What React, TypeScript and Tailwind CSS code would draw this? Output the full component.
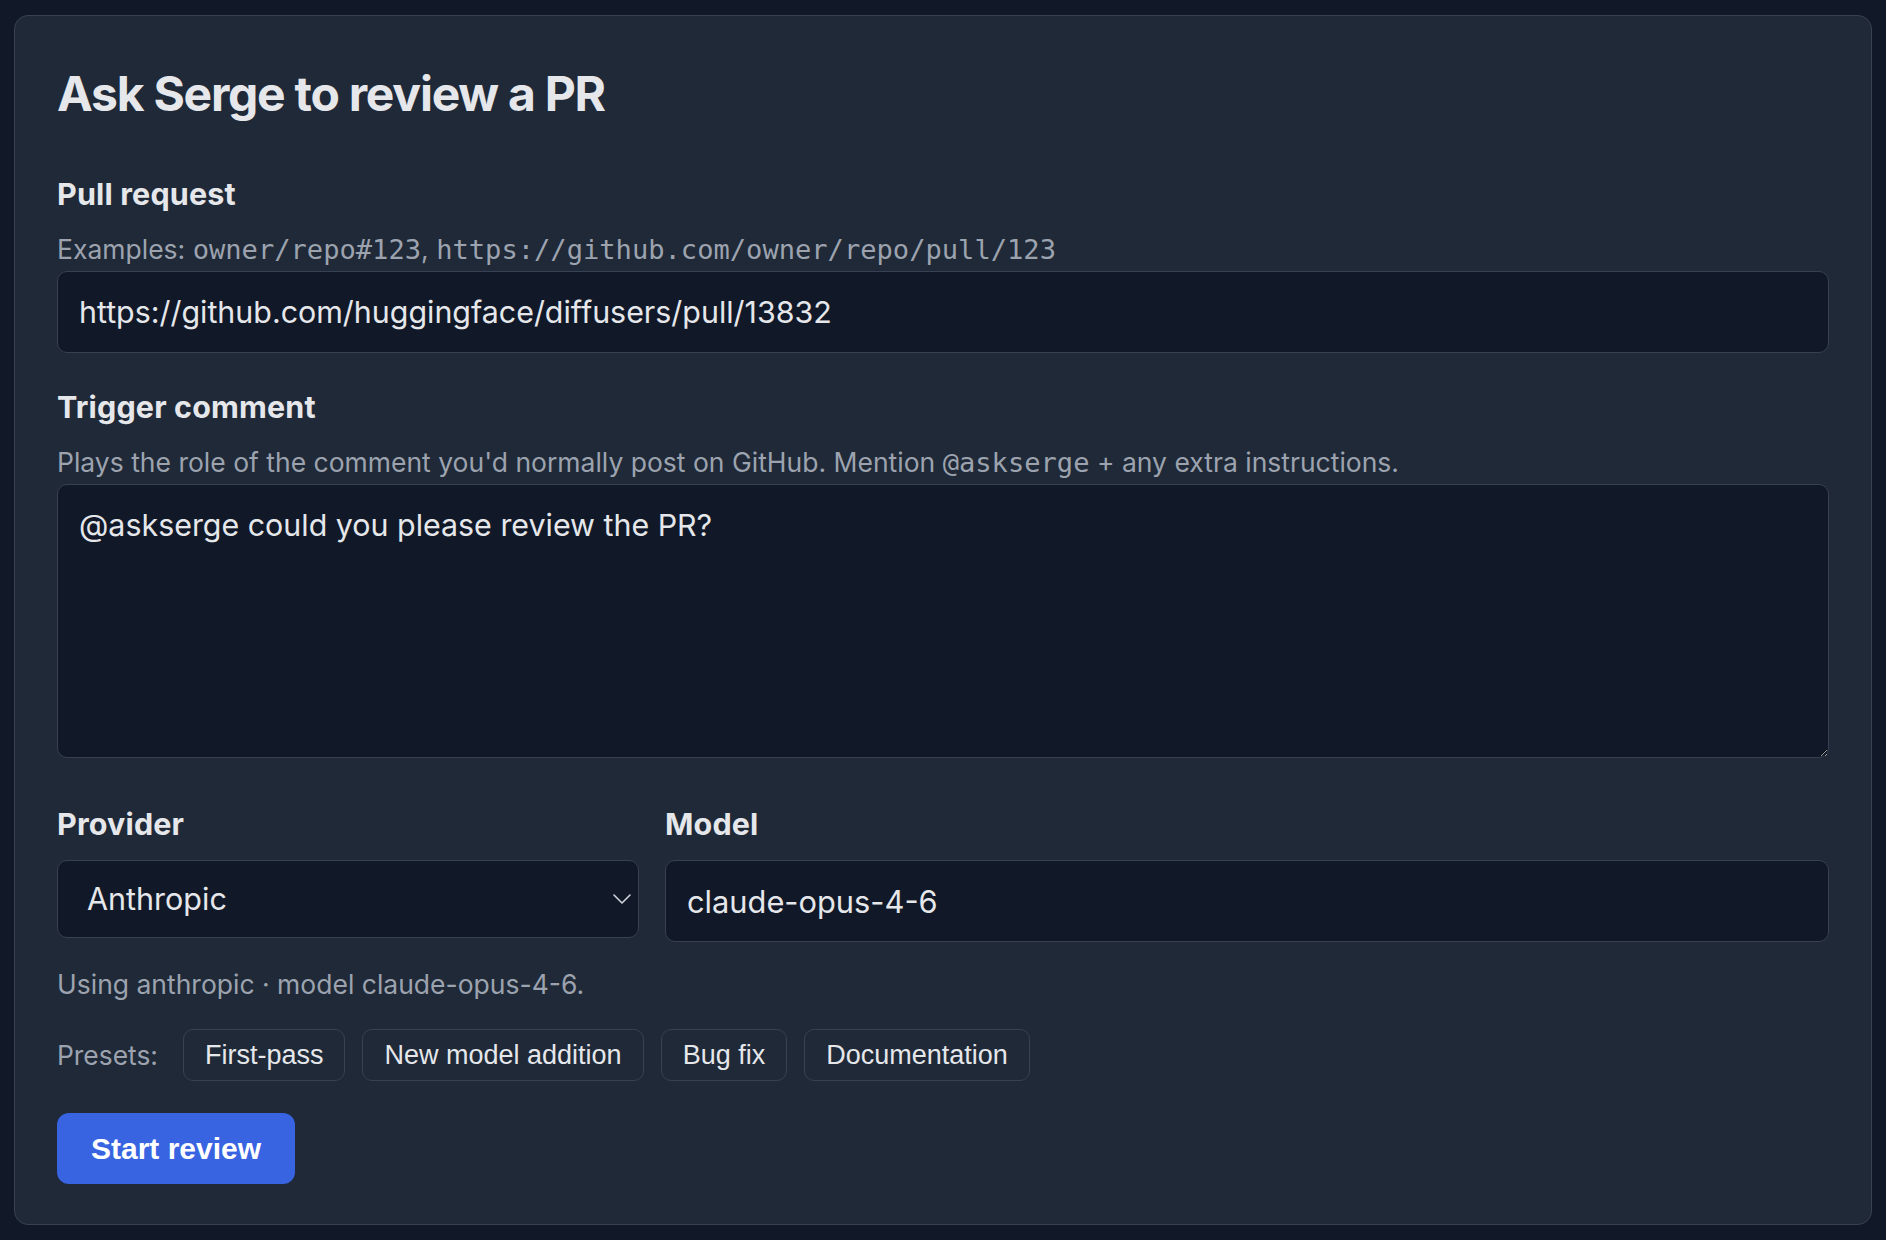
import React from "react";

const sans = { fontFamily: "Inter, 'Noto Sans', sans-serif" };
const mono = { fontFamily: "'DejaVu Sans Mono', 'Liberation Mono', monospace" };
const btnFont = { fontFamily: "'Liberation Sans', Arial, sans-serif" };

function Label({ children }: { children: React.ReactNode }) {
  return (
    <label className="block text-[30.5px] leading-[36px] font-bold tracking-[0.15px] text-[#e5e7eb]">
      {children}
    </label>
  );
}

function Code({ children }: { children: React.ReactNode }) {
  return (
    <code style={mono} className="text-[27.1px] leading-[20px]">
      {children}
    </code>
  );
}

const presets = ["First-pass", "New model addition", "Bug fix", "Documentation"];

export default function App() {
  return (
    <div style={sans} className="min-h-screen bg-[#111827] pt-[15px] px-[14px] pb-[14px]">
      <div className="rounded-[14px] border border-[#374151] bg-[#1f2937] px-[42px] pt-[48px] pb-[40px]">
        <h1 className="text-[48px] leading-[60px] font-bold tracking-[-1.25px] text-[#e5e7eb]">
          Ask Serge to review a PR
        </h1>

        {/* Pull request */}
        <div className="mt-[52px]">
          <Label>Pull request</Label>
          <p className="mt-[21px] text-[26.5px] leading-[32px] text-[#9ca3af]">
            Examples: <Code>owner/repo#123</Code>, <Code>https://github.com/owner/repo/pull/123</Code>
          </p>
          <input
            style={sans}
            defaultValue="https://github.com/huggingface/diffusers/pull/13832"
            className="mt-[6px] block w-full h-[82px] rounded-[10px] border border-[#374151] bg-[#111827] px-[21px] text-[30.4px] text-[#e5e7eb] outline-none"
          />
        </div>

        {/* Trigger comment */}
        <div className="mt-[36px]">
          <Label>Trigger comment</Label>
          <p className="mt-[21px] text-[26.5px] leading-[32px] text-[#9ca3af]">
            Plays the role of the comment you'd normally post on GitHub. Mention <Code>@askserge</Code> + any extra instructions.
          </p>
          <textarea
            style={sans}
            defaultValue="@askserge could you please review the PR?"
            className="mt-[6px] block w-full h-[274px] rounded-[10px] border border-[#374151] bg-[#111827] px-[21px] py-[20px] text-[30.4px] leading-[40px] text-[#e5e7eb] outline-none"
          />
        </div>

        {/* Provider / model */}
        <div className="mt-[48px] grid grid-cols-[1fr_2fr] gap-x-[26px] items-start">
          <div>
            <Label>Provider</Label>
            <div className="relative mt-[18px]">
              <select
                style={sans}
                defaultValue="anthropic"
                className="block w-full h-[78px] appearance-none rounded-[10px] border border-[#374151] bg-[#111827] pl-[29px] pr-[40px] text-[30.5px] text-[#e5e7eb] outline-none"
              >
                <option value="anthropic">Anthropic</option>
                <option value="openai">OpenAI</option>
              </select>
              <svg
                className="pointer-events-none absolute right-[8px] top-1/2 -translate-y-1/2"
                width="18"
                height="10"
                viewBox="0 0 18 10"
                fill="none"
              >
                <path d="M1 1l8 8 8-8" stroke="#d1d5db" strokeWidth="1.6" strokeLinecap="round" strokeLinejoin="round" />
              </svg>
            </div>
          </div>
          <div>
            <Label>Model</Label>
            <input
              style={sans}
              defaultValue="claude-opus-4-6"
              className="mt-[18px] block w-full h-[82px] rounded-[10px] border border-[#374151] bg-[#111827] px-[21px] text-[30.8px] text-[#e5e7eb] outline-none"
            />
          </div>
        </div>

        <p className="mt-[26px] text-[26.5px] leading-[32px] text-[#9ca3af]">
          Using anthropic · model claude-opus-4-6.
        </p>

        {/* Presets */}
        <div className="mt-[29px] flex items-center gap-[17px]">
          <span className="mr-[8px] text-[26.4px] leading-[32px] text-[#9ca3af]">Presets:</span>
          {presets.map((p) => (
            <button
              key={p}
              type="button"
              style={btnFont}
              className="flex h-[52px] items-center rounded-[10px] border border-[#374151] bg-transparent px-[21px] text-[27px] text-[#e5e7eb]"
            >
              {p}
            </button>
          ))}
        </div>

        <button
          type="button"
          style={btnFont}
          className="mt-[32px] flex h-[71px] items-center rounded-[12px] bg-[#3864e2] px-[34px] text-[30px] font-bold text-white"
        >
          Start review
        </button>
      </div>
    </div>
  );
}
